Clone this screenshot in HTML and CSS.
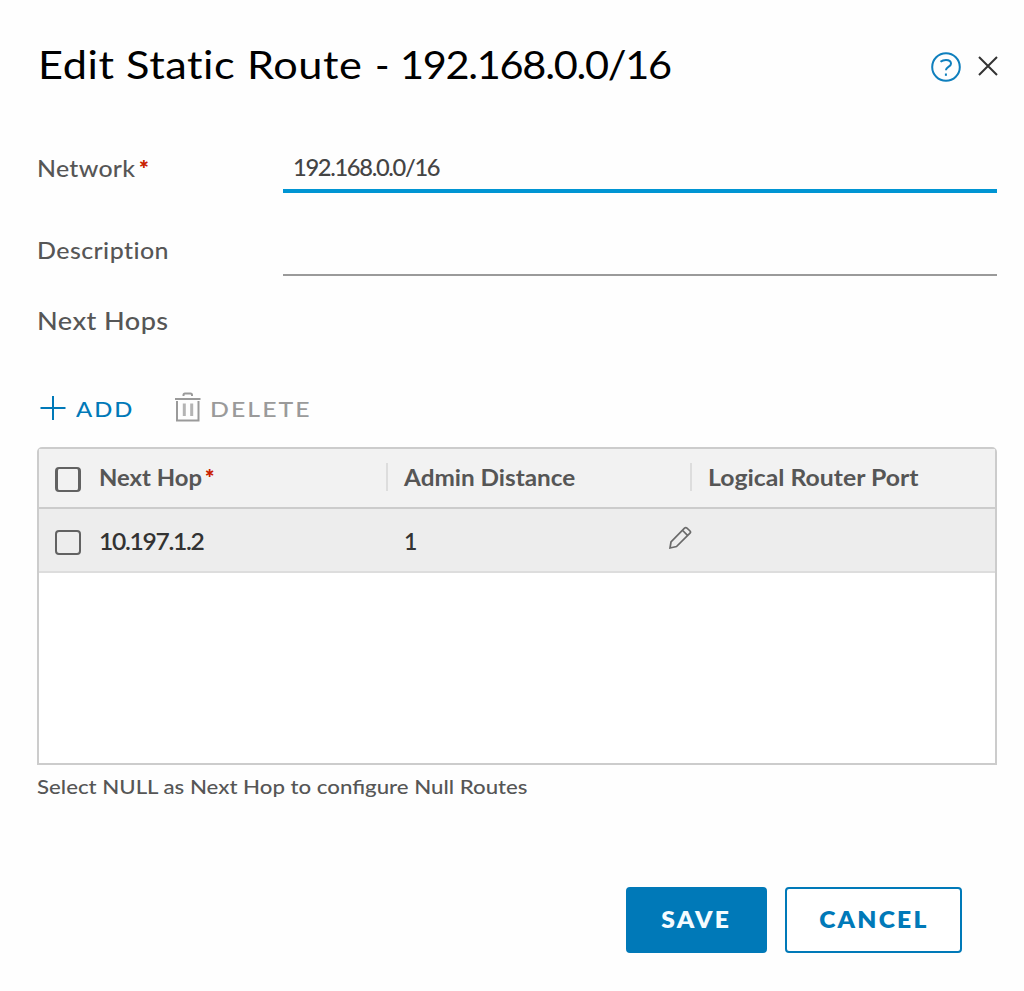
FILE: index.html
```html
<!DOCTYPE html>
<html lang="en">
<head>
<meta charset="utf-8">
<title>Edit Static Route</title>
<link rel="stylesheet" href="styles.css">
</head>
<body>
<main class="dialog">
  <header class="dialog-header">
    <h1 class="title"><span class="title-name">Edit Static Route</span><span class="title-dash">-</span><span class="title-ip">192.168.0.0/16</span></h1>
    <div class="header-actions">
      <svg class="icon-help" viewBox="0 0 32 32" width="32" height="32"><circle cx="16" cy="16" r="13.8"/><path d="M10.500 10.800C12 9.600 14 9 16 9c3 0 5 1.300 5 3.700 0 3.100-5 3.300-5 6.200v.4"/><path d="M15.900 22.500v2.300"/></svg>
      <svg class="icon-close" viewBox="0 0 20 20" width="20" height="20"><path d="M1 1 19 19M19 1 1 19"/></svg>
    </div>
  </header>
  <div class="field field-network">
    <label class="label"><span class="label-network">Network</span><span class="required">*</span></label>
    <div class="input input-active"><span class="network-value">192.168.0.0/16</span></div>
  </div>
  <div class="field field-description">
    <label class="label"><span class="label-description">Description</span></label>
    <div class="input"></div>
  </div>
  <h2 class="section"><span class="section-text">Next Hops</span></h2>
  <div class="toolbar">
    <div class="tool tool-add">
      <svg viewBox="0 0 26 26" width="26" height="26"><path d="M0.500 13H25.500M13 1V25"/></svg>
      <span class="add-text">ADD</span>
    </div>
    <div class="tool tool-delete">
      <svg viewBox="0 0 26 30" width="26" height="30"><path d="M0 7H25.500M2 9V28.500H23.500V9M8.500 4V3Q8.500 1.500 10 1.500H15.500Q17 1.500 17 3V4"/><path class="trash-bars" d="M9.300 11.500V24M16.700 11.500V24"/></svg>
      <span class="delete-text">DELETE</span>
    </div>
  </div>
  <section class="grid">
    <div class="row row-head">
      <div class="cell cell-check"><i class="checkbox checkbox-head"></i></div>
      <div class="cell cell-hop"><span class="head-hop">Next Hop</span><span class="required required-head">*</span></div>
      <div class="cell cell-distance"><span class="head-distance">Admin Distance</span></div>
      <div class="cell cell-port"><span class="head-port">Logical Router Port</span></div>
    </div>
    <div class="row row-body">
      <div class="cell cell-check"><i class="checkbox"></i></div>
      <div class="cell cell-hop"><span class="hop-value">10.197.1.2</span></div>
      <div class="cell cell-distance"><span class="distance-value">1</span>
        <svg class="icon-edit" viewBox="0 0 24 24" width="24" height="24"><path d="M2 22 3 16 16.500 2.200Q17.700 1.200 19 2.200L22 5Q23 6.200 22 7.200L8.500 20.500Z M14.700 4.500 19.500 9.400"/></svg>
      </div>
      <div class="cell cell-port"></div>
    </div>
  </section>
  <p class="hint"><span class="hint-text">Select NULL as Next Hop to configure Null Routes</span></p>
  <footer class="actions">
    <button class="button button-save"><span class="save-text">SAVE</span></button>
    <button class="button button-cancel"><span class="cancel-text">CANCEL</span></button>
  </footer>
</main>
</body>
</html>
```

FILE: styles.css
```css
* { box-sizing: border-box; }
body {
  margin: 0;
  background: #fefefe;
  color: #565656;
  font-family: Lato, "Open Sans", sans-serif;
  font-size: 23px;
  line-height: 30px;
}
.dialog {
  height: 991px;
  padding: 36px 27px 0 37px;
  display: flex;
  flex-direction: column;
}
svg { fill: none; stroke: currentColor; flex: none; display: block; }
span { white-space: nowrap; display: inline-block; transform-origin: 0 50%; }
.dialog-header { display: flex; justify-content: space-between; height: 60px; }
.title { margin: 0; color: #000; font-size: 39px; font-weight: 400; line-height: 56px; display: flex; }
.title-name { width: 338px; letter-spacing: 0.5px; transform: translateX(1px) scaleX(1.11); }
.title-dash { width: 25px; }
.title-ip { letter-spacing: -1.2px; transform: scaleX(1.063); }
.header-actions { display: flex; align-items: center; gap: 16px; padding-top: 2px; margin-right: -1px; }
.icon-help { color: #0f7fbd; stroke-width: 2; }
.icon-close { color: #333; stroke-width: 2; margin-top: -3px; }

.field { display: grid; grid-template-columns: 246px 1fr; }
.field-network { margin-top: 51px; height: 46px; }
.field-description { margin-top: 36px; height: 47px; }
.label { padding-top: 6px; font-weight: 500; display: flex; }
.label-network { width: 102px; letter-spacing: 0.3px; transform: scaleX(1.08); }
.label-description { letter-spacing: 0.4px; transform: scaleX(1.085); }
.required { color: #c92100; font-weight: 800; }
.input { border-bottom: 2px solid #9a9a9a; padding: 5px 10px; }
.input-active { border-bottom: 4px solid #0095d3; color: #444; }
.network-value { font-weight: 500; letter-spacing: -1.300px; transform: scaleX(1.03); }
.section { margin: 29px 0 0; font-size: 25px; font-weight: 500; line-height: 30px; }
.section-text { letter-spacing: 0.4px; transform: scaleX(1.085); }

.toolbar { display: flex; height: 34px; margin-top: 56px; padding-left: 3px; }
.tool { display: flex; align-items: center; font-weight: 500; }
.tool-add { width: 135px; color: #0079b8; gap: 10px; stroke-width: 2; }
.tool-add svg { margin-top: -1px; }
.tool-delete { color: #9a9a9a; gap: 9px; stroke-width: 2; }
.tool-delete svg { margin-top: -2px; }
.trash-bars { stroke: #b4b4b4; stroke-width: 3; }
.add-text, .delete-text { font-size: 22px; letter-spacing: 1.800px; margin-top: 2px; }
.add-text { transform: scaleX(1.08); }
.delete-text { transform: scaleX(1.13); }

.grid { height: 318px; margin-top: 22px; border: 2px solid #cccccc; border-radius: 5px 5px 0 0; background: #fff; }
.row { display: grid; grid-template-columns: 60px 287px 304px 1fr; }
.row-head { height: 60px; border-bottom: 2px solid #cccccc; background: #f2f2f2; font-size: 22px; font-weight: 700; }
.row-body { height: 64px; border-bottom: 2px solid #dddddd; background: #ededed; color: #333; font-weight: 600; }
.cell { display: flex; align-items: center; }
.cell-check { padding: 3px 0 0 16px; }
.row-head .cell-distance, .row-head .cell-port { height: 28px; margin-top: 14px; border-left: 2px solid #dddddd; padding: 2px 0 0 16px; }
.row-body .cell-distance { justify-content: space-between; padding-left: 18px; }
.row-body .cell-check { padding-top: 4px; }
.hop-value { letter-spacing: -1.2px; transform: scaleX(1.07); margin-top: 2px; }
.distance-value { margin-top: 2px; }
.checkbox { width: 26px; height: 25px; border: 2px solid #626262; border-radius: 4px; }
.checkbox-head { border-width: 2px 3px; }
.head-hop { width: 106px; transform: scaleX(1.085); }
.head-distance { transform: scaleX(1.105); }
.head-port { transform: scaleX(1.127); }
.icon-edit { color: #6a6a6a; stroke-width: 1.700; margin: -4px -2px 0 0; }
.hint { margin: 6px 0 0; font-size: 20px; font-weight: 500; line-height: 30px; }
.hint-text { transform: scaleX(1.112); }
.actions { display: flex; justify-content: flex-end; gap: 18px; margin: 86px 35px 0 0; }
.button { height: 66px; border: 2px solid #0079b8; border-radius: 4px; padding: 0; font: 800 22px/30px Lato, sans-serif; }
.button-save { width: 141px; background: #0079b8; color: #f4fbff; }
.button-cancel { width: 177px; background: #fff; color: #0079b8; }
.save-text, .cancel-text { letter-spacing: 2px; transform: scaleX(1.12); transform-origin: 50% 50%; }
```
